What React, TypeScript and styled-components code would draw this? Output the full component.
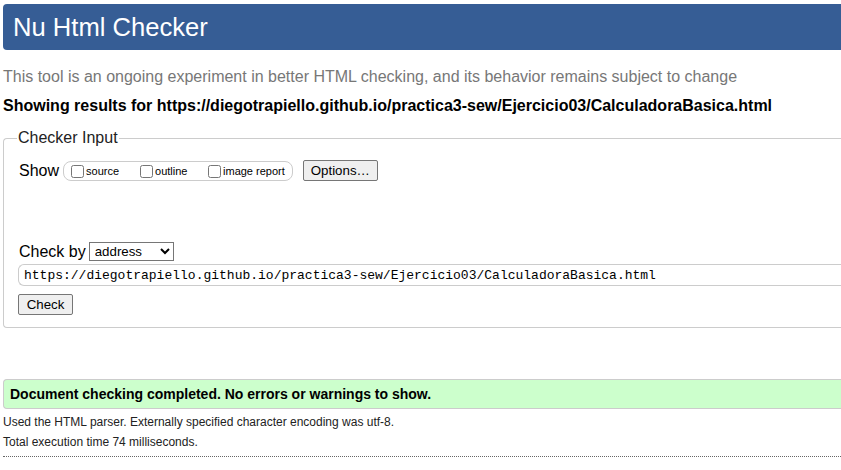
import styled, { createGlobalStyle } from "styled-components";

const Global = createGlobalStyle`
  html, body {
    margin: 0;
    background: #fff;
    overflow: hidden;
  }
  body {
    font-family: "Liberation Sans", Arial, sans-serif;
    color: #000;
  }
`;

const Page = styled.div`
  width: 900px;
  padding: 4px 0 0 3px;
`;

const Header = styled.h1`
  margin: 0;
  height: 46px;
  background: #365d95;
  border-radius: 4px 0 0 4px;
  color: #fff;
  font-size: 25.6px;
  font-weight: normal;
  line-height: 46px;
  padding-left: 10px;
`;

const Intro = styled.p`
  margin: 18px 0 0;
  color: #777;
  font-size: 16px;
  line-height: 18px;
`;

const Results = styled.p`
  margin: 11px 0 0;
  font-size: 16px;
  font-weight: bold;
  line-height: 18px;
`;

const Fieldset = styled.fieldset`
  margin: 14px 0 0;
  padding: 0 0 12px 14px;
  border: 1px solid #ccc;
  border-right: none;
  border-radius: 4px 0 0 4px;
  min-width: 0;
`;

const Legend = styled.legend`
  padding: 0 1px;
  margin-left: -1px;
  font-size: 16px;
  color: #222;
`;

const Row = styled.div<{ $top: number }>`
  display: flex;
  align-items: center;
  margin-top: ${(p) => p.$top}px;
  padding-left: 1px;
  font-size: 16px;
`;

const Pill = styled.div`
  display: flex;
  align-items: flex-end;
  box-sizing: border-box;
  height: 20px;
  margin-left: 4px;
  padding: 0 7px 1px 3px;
  border: 1px solid #ccc;
  border-radius: 8px;
`;

const Check = styled.label<{ $w?: number }>`
  display: inline-block;
  width: ${(p) => (p.$w ? `${p.$w}px` : "auto")};
  font-size: 11px;
  line-height: 13px;
  white-space: nowrap;
  input {
    margin: 0 2px 1px 4px;
    width: 13px;
    height: 13px;
    vertical-align: -3px;
  }
`;

const Button = styled.button`
  font-family: "Liberation Sans", Arial, sans-serif;
  font-size: 13.3px;
  height: 21px;
  padding: 1px 6px;
  background: #efefef;
  border: 1px solid #767676;
  border-radius: 2px;
  color: #000;
`;

const OptionsButton = styled(Button)`
  margin-left: 10px;
  width: 75px;
`;

const Select = styled.select`
  margin-left: 3px;
  width: 85px;
  height: 19px;
  font-family: "Liberation Sans", Arial, sans-serif;
  font-size: 13.3px;
  border: 1px solid #767676;
  border-radius: 0;
  background: #fff;
  color: #000;
  padding: 0 0 0 1px;
`;

const UrlInput = styled.input`
  display: block;
  box-sizing: border-box;
  margin: 3px 0 0 0;
  width: 100%;
  height: 22px;
  padding: 0 5px;
  border: 1px solid #ccc;
  border-right: none;
  border-radius: 6px 0 0 6px;
  font-family: "Liberation Mono", "DejaVu Sans Mono", monospace;
  font-size: 13px;
  color: #000;
  outline: none;
`;

const CheckButton = styled(Button)`
  display: block;
  margin-top: 8px;
  width: 55px;
`;

const Success = styled.p`
  margin: 51px 0 0;
  padding: 0 6px;
  height: 28px;
  line-height: 28px;
  background: #ccffcc;
  border: 1px solid #ccc;
  border-right: none;
  border-radius: 4px 0 0 4px;
  font-size: 14px;
  font-weight: bold;
`;

const Details = styled.p<{ $top: number }>`
  margin: ${(p) => p.$top}px 0 0;
  font-size: 12px;
  line-height: 14px;
  color: #222;
`;

const Rule = styled.hr`
  margin: 7px 0 0;
  border: none;
  border-top: 1px dotted #666;
  height: 0;
`;

export default function App() {
  const url =
    "https://diegotrapiello.github.io/practica3-sew/Ejercicio03/CalculadoraBasica.html";
  return (
    <Page>
      <Global />
      <Header>Nu Html Checker</Header>
      <Intro>
        This tool is an ongoing experiment in better HTML checking, and its
        behavior remains subject to change
      </Intro>
      <Results>Showing results for {url}</Results>
      <Fieldset>
        <Legend>Checker Input</Legend>
        <Row $top={13}>
          Show
          <Pill>
            <Check $w={69}>
              <input type="checkbox" />
              source
            </Check>
            <Check $w={68}>
              <input type="checkbox" />
              outline
            </Check>
            <Check>
              <input type="checkbox" />
              image report
            </Check>
          </Pill>
          <OptionsButton>Options…</OptionsButton>
        </Row>
        <Row $top={61}>
          Check by
          <Select defaultValue="address">
            <option value="address">address</option>
            <option value="file">file upload</option>
            <option value="text">text input</option>
          </Select>
        </Row>
        <UrlInput defaultValue={url} readOnly />
        <CheckButton>Check</CheckButton>
      </Fieldset>
      <Success>Document checking completed. No errors or warnings to show.</Success>
      <Details $top={6}>
        Used the HTML parser. Externally specified character encoding was utf-8.
      </Details>
      <Details $top={6}>Total execution time 74 milliseconds.</Details>
      <Rule />
    </Page>
  );
}
